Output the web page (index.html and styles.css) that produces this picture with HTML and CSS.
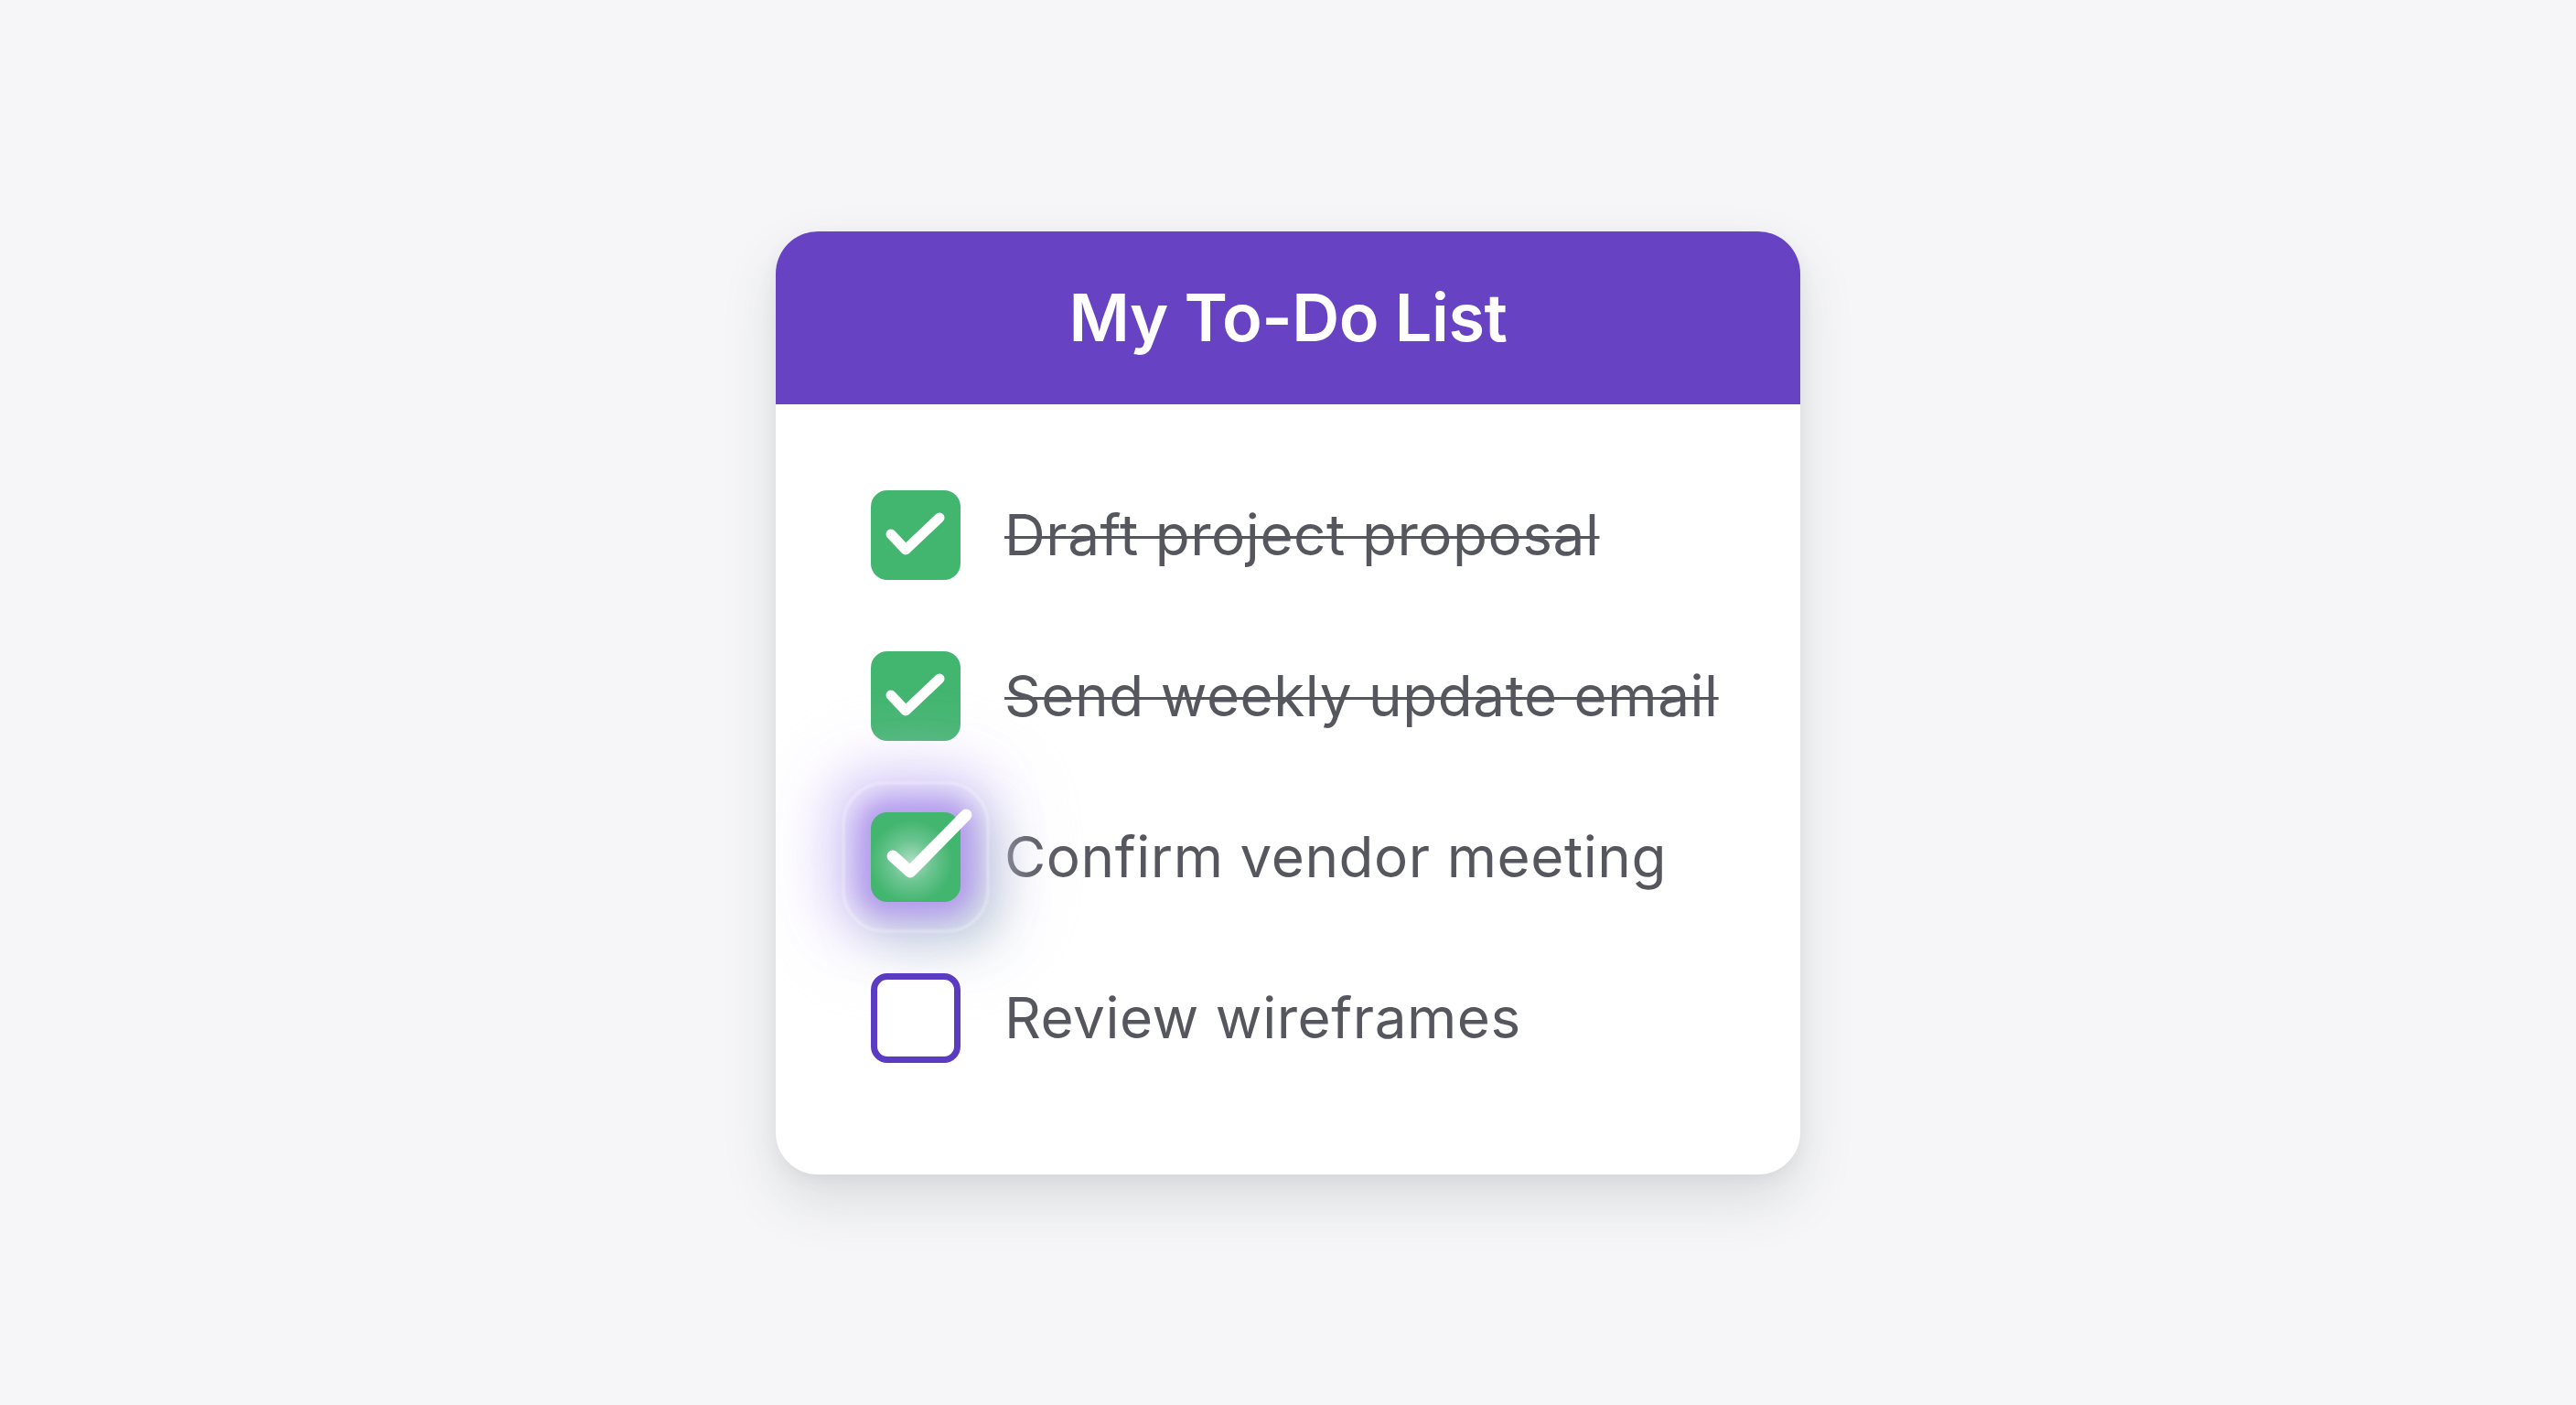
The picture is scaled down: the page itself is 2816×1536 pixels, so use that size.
FILE: index.html
```html
<!DOCTYPE html>
<html lang="en">
<head>
<meta charset="utf-8">
<title>My To-Do List</title>
<link rel="stylesheet" href="styles.css">
</head>
<body>
<main class="card">
  <header class="card-header">
    <h1 class="title">My To-Do List</h1>
  </header>
  <ul class="list">
    <li class="item done">
      <span class="box checked">
        <svg class="check" viewBox="0 0 98 98"><polyline points="22,48 38,65 75,30"/></svg>
      </span>
      <span class="label">Draft project proposal</span>
    </li>
    <li class="item done">
      <span class="box checked">
        <svg class="check" viewBox="0 0 98 98"><polyline points="22,48 38,65 75,30"/></svg>
      </span>
      <span class="label">Send weekly update email</span>
    </li>
    <li class="item">
      <span class="box checked active">
        <span class="ring"></span>
        <span class="shine"></span>
        <svg class="check big" viewBox="0 0 98 98"><polyline points="24,48 43,65 104,3"/></svg>
      </span>
      <span class="label">Confirm vendor meeting</span>
    </li>
    <li class="item">
      <span class="box empty"></span>
      <span class="label">Review wireframes</span>
    </li>
  </ul>
</main>
</body>
</html>
```

FILE: styles.css
```css
html, body {
  margin: 0;
  padding: 0;
}
body {
  width: 100vw;
  height: 100vh;
  background: #f6f6f8;
  display: flex;
  align-items: center;
  justify-content: center;
  font-family: "Inter", "Noto Sans", "Liberation Sans", sans-serif;
  overflow: hidden;
}
.card {
  width: 1120px;
  background: #ffffff;
  border-radius: 46px;
  overflow: hidden;
  box-shadow: 0 28px 60px rgba(70, 80, 90, 0.15), 0 6px 18px rgba(70, 80, 90, 0.07);
}
.card-header {
  height: 189px;
  background: #6743c4;
  display: flex;
  align-items: center;
  justify-content: center;
}
.title {
  margin: 0;
  color: #ffffff;
  font-size: 72px;
  font-weight: 600;
  letter-spacing: -0.5px;
  line-height: 1;
}
.list {
  list-style: none;
  margin: 0;
  padding: 94px 104px 122px;
  display: flex;
  flex-direction: column;
  gap: 78px;
}
.item {
  display: flex;
  align-items: center;
  gap: 48px;
  height: 98px;
}
.box {
  position: relative;
  flex: 0 0 auto;
  width: 98px;
  height: 98px;
  border-radius: 18px;
  box-sizing: border-box;
}
.box.checked {
  background: #42b56f;
}
.box.empty {
  border: 7px solid #5b3bc1;
  background: #ffffff;
}
.check {
  position: absolute;
  left: 0;
  top: 0;
  width: 98px;
  height: 98px;
  overflow: visible;
}
.check polyline {
  fill: none;
  stroke: #ffffff;
  stroke-width: 11;
  stroke-linecap: round;
  stroke-linejoin: round;
}
.check.big polyline {
  stroke-width: 13;
}
.box.active {
  box-shadow:
    0 0 26px 14px rgba(170, 140, 235, 0.75),
    -6px -6px 50px 38px rgba(200, 180, 248, 0.55),
    18px 22px 46px 26px rgba(165, 205, 190, 0.5),
    0 0 90px 54px rgba(225, 215, 250, 0.4);
}
.ring {
  position: absolute;
  left: -31px;
  top: -33px;
  width: 160px;
  height: 164px;
  border-radius: 46px;
  border: 2px solid rgba(255, 255, 255, 0.5);
  box-sizing: border-box;
  filter: blur(1.5px);
}
.shine {
  position: absolute;
  inset: 0;
  border-radius: 18px;
  background: radial-gradient(circle at 45% 55%, rgba(210, 235, 225, 0.75) 0%, rgba(170, 220, 195, 0.4) 30%, rgba(66, 181, 111, 0) 60%);
}
.label {
  font-size: 62px;
  font-weight: 400;
  color: #56575e;
  line-height: 1;
  letter-spacing: 0.55px;
  white-space: nowrap;
}
.item.done .label {
  text-decoration: line-through;
  text-decoration-thickness: 3px;
  text-decoration-color: #56575e;
}
```
